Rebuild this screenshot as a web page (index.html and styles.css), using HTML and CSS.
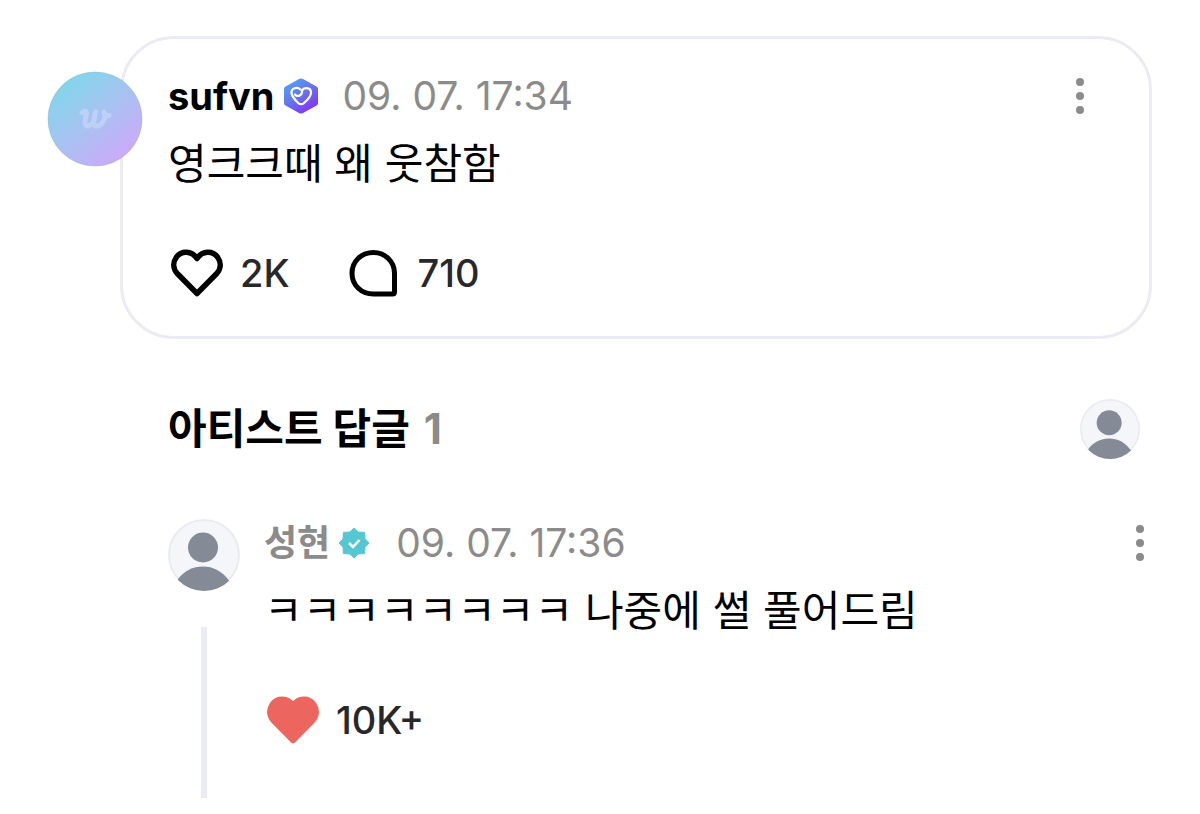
FILE: index.html
```html
<!DOCTYPE html>
<html lang="ko">
<head>
  <title>sufvn</title>
  <meta charset="utf-8">
  <meta name="viewport" content="width=device-width, initial-scale=1">
  <link rel="stylesheet" href="styles.css">
</head>
<body>
  <svg class="sprite" aria-hidden="true">
    <defs>
      <symbol id="person" viewBox="0 0 72 72">
        <clipPath id="person-clip"><circle cx="36" cy="36" r="36"/></clipPath>
        <circle cx="36" cy="36" r="35" fill="#f4f6f9" stroke="#ebecf0" stroke-width="2"/>
        <g fill="#848a96" clip-path="url(#person-clip)">
          <circle cx="35" cy="28.500" r="15"/>
          <path d="M10 60C16 52 25 47.500 35 47.500S54 52 61 61.500V72H10z"/>
        </g>
      </symbol>
      <symbol id="dots" viewBox="0 0 24 48">
        <g fill="#8b8b8b">
          <circle cx="12" cy="10" r="4"/>
          <circle cx="12" cy="24" r="4"/>
          <circle cx="12" cy="38" r="4"/>
        </g>
      </symbol>
      <symbol id="heart" viewBox="0 0 54 48">
        <path d="M27 9.500C21.500 1.500 11.500 1.500 6.500 8C2.500 13.500 3 20 7.500 24.800L27 44.500L46.500 24.800C51 20 51.500 13.500 47.500 8C42.500 1.500 32.500 1.500 27 9.500z" stroke-width="5.500" stroke-linejoin="round"/>
      </symbol>
    </defs>
  </svg>

  <main class="page">
    <article class="post">
      <svg class="post-avatar" viewBox="0 0 96 96" role="img" aria-label="sufvn">
        <defs>
          <linearGradient id="avatar-fill" x1="0.150" y1="0.100" x2="0.800" y2="0.900">
            <stop offset="0" stop-color="#80d7ea"/>
            <stop offset="0.500" stop-color="#a7c3f1"/>
            <stop offset="1" stop-color="#ccaafa"/>
          </linearGradient>
        </defs>
        <circle cx="48" cy="48" r="47" fill="url(#avatar-fill)" stroke="#8fb4d8" stroke-opacity="0.500"/>
        <path d="M35 41.500C37 40 40 39.500 39.500 42.500L38 51C37.500 56 43 56.500 46.500 51L48.500 41L46.500 51C46 57 53.500 56.500 57 49C58.500 46 58.500 43 57 41C57 44 59 46 62 44.500" fill="none" stroke="#bfd0f7" stroke-width="5" stroke-linecap="round" stroke-linejoin="round"/>
      </svg>

      <header class="head">
        <span class="name">sufvn</span>
        <svg class="badge badge-member" viewBox="0 0 36 36" role="img" aria-label="Membership">
          <defs>
            <linearGradient id="badge-fill" x1="0.100" y1="0" x2="0.800" y2="1">
              <stop offset="0" stop-color="#4fa8f5"/>
              <stop offset="0.500" stop-color="#6673ee"/>
              <stop offset="1" stop-color="#8b2cf5"/>
            </linearGradient>
          </defs>
          <path d="M16 1.100Q18 0 20 1.100L33.500 8.500Q35 9.400 35 11V25Q35 26.600 33.500 27.500L20 34.900Q18 36 16 34.900L2.500 27.500Q1 26.600 1 25V11Q1 9.400 2.500 8.500z" fill="url(#badge-fill)"/>
          <path d="M17.500 11.500C14 8.500 8 10 8.500 15C9 19 12 22 15.500 25.300Q18 27 20.500 25.300C24 22.500 28 19 28 14.500C28 9 19.500 8.500 19 13.500C19 17.500 14.500 19.500 12 16.500" fill="none" stroke="#fff" stroke-width="2.200" stroke-linecap="round"/>
        </svg>
        <time class="date">09. 07. 17:34</time>
        <button type="button" class="more" aria-label="더보기"><svg viewBox="0 0 24 48"><use href="#dots"/></svg></button>
      </header>
      <p class="text">영크크때 왜 웃참함</p>
      <div class="actions">
        <button type="button" class="action">
          <svg class="icon heart" viewBox="0 0 54 48" aria-hidden="true"><use href="#heart"/></svg>
          <span>2K</span>
        </button>
        <button type="button" class="action">
          <svg class="icon" viewBox="0 0 54 48" aria-hidden="true"><path d="M25.500 3.500C37 3.500 46.500 12.500 46.500 24V43Q46.500 45 44.500 45H25.500C13 45 4 36 4 24.200S13 3.500 25.500 3.500z" fill="none" stroke="#000" stroke-width="5"/></svg>
          <span>710</span>
        </button>
      </div>
    </article>

    <section class="replies">
      <div class="replies-head">
        <h2>아티스트 답글 <span class="count">1</span></h2>
        <svg class="avatar-small" viewBox="0 0 72 72" role="img" aria-label="성현"><use href="#person"/></svg>
      </div>

      <article class="reply">
        <div class="thread">
          <svg class="avatar" viewBox="0 0 72 72" aria-hidden="true"><use href="#person"/></svg>
          <div class="thread-line"></div>
        </div>
        <div class="reply-body">
          <header class="head">
            <span class="name name-artist">성현</span>
            <svg class="badge badge-artist" viewBox="0 0 32 32" role="img" aria-label="Artist">
              <path d="M16 1L20.200 5L26.600 5.400L27 11.800L31 16L27 20.200L26.600 26.600L20.200 27L16 31L11.800 27L5.400 26.600L5 20.200L1 16L5 11.800L5.400 5.400L11.800 5z" fill="#56c7d1" stroke="#56c7d1" stroke-linejoin="round"/>
              <path d="M11 16L15 20L21.500 13" fill="none" stroke="#fff" stroke-width="2.500"/>
            </svg>
            <time class="date">09. 07. 17:36</time>
            <button type="button" class="more" aria-label="더보기"><svg viewBox="0 0 24 48"><use href="#dots"/></svg></button>
          </header>
          <p class="text">ㅋㅋㅋㅋㅋㅋㅋㅋ 나중에 썰 풀어드림</p>
          <div class="actions">
            <button type="button" class="action">
              <svg class="icon heart heart-liked" viewBox="0 0 54 48" aria-hidden="true"><use href="#heart"/></svg>
              <span>10K+</span>
            </button>
          </div>
        </div>
      </article>
    </section>
  </main>
</body>
</html>
```
FILE: styles.css
```css
*, *::before, *::after {
  margin: 0;
  padding: 0;
  box-sizing: border-box;
}

body {
  background-color: #FFFFFF;
  color: #000000;
  font-family: "Inter", "Noto Sans CJK KR", sans-serif;
}

svg {
  display: block;
  flex-shrink: 0;
}

button {
  border: none;
  background: none;
  color: inherit;
  font-family: inherit;
  cursor: pointer;
}

.sprite {
  position: absolute;
  width: 0;
  height: 0;
}

.page {
  padding: 36px 48px 16px;
}

.post {
  position: relative;
  margin-left: 72px;
  border: 3px solid #EBEBF3;
  border-radius: 54px;
  padding: 33px 45px 39px;
}

/* avatar hangs over the left edge of the card */
.post-avatar {
  position: absolute;
  top: 32px;
  left: -76px;
  width: 96px;
  height: 96px;
}

.head {
  display: flex;
  align-items: center;
  height: 48px;
}

.name {
  font-size: 38px;
  font-weight: 700;
  line-height: 48px;
}

.name-artist {
  color: #8B8B8B;
  font-size: 36px;
}

.badge {
  margin-left: 8px;
}

.badge-member {
  width: 36px;
  height: 36px;
}

.badge-artist {
  width: 32px;
  height: 32px;
}

.date {
  margin-left: 26px;
  color: #8B8B8B;
  font-size: 39px;
  line-height: 48px;
}

.post .date {
  margin-left: 24px;
}

.more {
  width: 24px;
  height: 48px;
  margin-left: auto;
}

.post .more {
  margin-right: 12px;
}

.text {
  margin-top: 14px;
  font-size: 42px;
  line-height: 60px;
}

.actions {
  display: flex;
  gap: 58px;
  margin-top: 55px;
  padding-left: 2px;
}

.action {
  display: flex;
  align-items: center;
  gap: 16px;
  height: 48px;
  color: #28282A;
  font-size: 38px;
  font-weight: 500;
}

.icon {
  width: 54px;
  height: 48px;
}

.heart {
  fill: none;
  stroke: #000000;
}

.heart-liked {
  fill: #EC665F;
  stroke: #EC665F;
}

.replies {
  margin-top: 60px;
  padding-left: 120px;
}

.replies-head {
  display: flex;
  align-items: center;
  justify-content: space-between;
  padding-right: 12px;
}

h2 {
  font-size: 42px;
  font-weight: 700;
  line-height: 60px;
}

.count {
  margin-left: 4px;
  color: #8B8B8B;
}

.avatar-small {
  width: 60px;
  height: 60px;
}

.reply {
  display: flex;
  gap: 24px;
  margin-top: 60px;
}

.thread {
  display: flex;
  flex-direction: column;
  align-items: center;
  gap: 36px;
}

.avatar {
  width: 72px;
  height: 72px;
}

.thread-line {
  flex: 1;
  width: 6px;
  background-color: #EBECF3;
}

.reply-body {
  flex: 1;
  padding-bottom: 54px;
}
```
